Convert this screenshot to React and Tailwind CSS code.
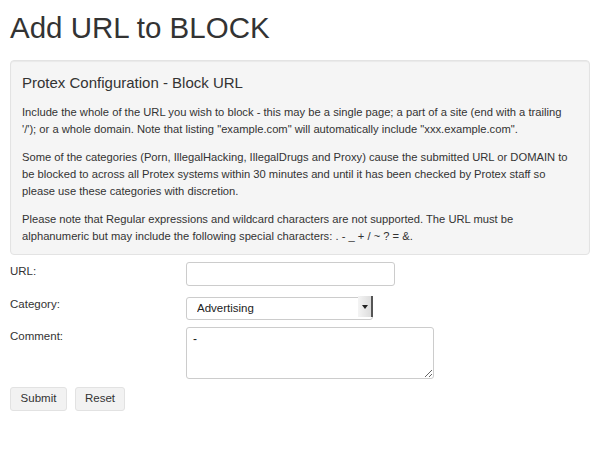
import React from 'react';

const Field = ({ label, children }) => (
  <>
    <label className="pt-[1px] text-[11.5px] leading-[17px] text-[#333]">{label}</label>
    <div>{children}</div>
  </>
);

const App = () => {
  return (
    <div className="min-h-[461px] bg-white px-[10px] font-['Liberation_Sans',Arial,sans-serif] text-[#333]">
      <h1 className="pt-[11px] text-[29.5px] leading-[34px]">Add URL to BLOCK</h1>

      <div className="mt-[15px] rounded-[4px] border border-[#e3e3e3] bg-[#f5f5f5] px-[11px] pt-[12px] pb-[9px] shadow-[inset_0_1px_1px_rgba(0,0,0,0.05)]">
        <h3 className="text-[15px] leading-[20px]">Protex Configuration - Block URL</h3>
        <div className="mt-[11px] space-y-[11px] text-[11.2px] leading-[17px]">
          <p>
            Include the whole of the URL you wish to block - this may be a single page; a part of a site (end with a trailing
            '/'); or a whole domain. Note that listing "example.com" will automatically include "xxx.example.com".
          </p>
          <p>
            Some of the categories (Porn, IllegalHacking, IllegalDrugs and Proxy) cause the submitted URL or DOMAIN to
            be blocked to across all Protex systems within 30 minutes and until it has been checked by Protex staff so
            please use these categories with discretion.
          </p>
          <p>
            Please note that Regular expressions and wildcard characters are not supported. The URL must be
            alphanumeric but may include the following special characters: . - _ + / ~ ? = &amp;.
          </p>
        </div>
      </div>

      <form className="mt-[7px] grid grid-cols-[176px_1fr] gap-y-[9px]">
        <Field label="URL:">
          <input
            type="text"
            className="block h-[24px] w-[209px] rounded-[3px] border border-[#ccc] bg-white px-[6px] text-[12px] outline-none"
          />
        </Field>
        <Field label="Category:">
          <div className="relative h-[23px] w-[187px]">
            <select className="h-full w-full appearance-none rounded-[3px] border border-[#ccc] bg-white pl-[10px] text-[11.5px] text-[#222] outline-none">
              <option>Advertising</option>
            </select>
            <div className="pointer-events-none absolute top-[1px] right-0 flex h-[21px] w-[15px] items-center justify-center border-r-[2px] border-[#555] bg-gradient-to-r from-[#f4f4f4] to-[#ddd]">
              <svg width="6" height="4" viewBox="0 0 6 4">
                <path d="M0 0h6L3 4z" fill="#222" />
              </svg>
            </div>
          </div>
        </Field>
        <Field label="Comment:">
          <textarea
            defaultValue="-"
            className="block h-[52px] w-[248px] rounded-[3px] border border-[#ccc] bg-white px-[6px] py-[4px] text-[12px] leading-[15px] text-[#222] outline-none"
          />
        </Field>
      </form>

      <div className="mt-[8px] flex gap-[8px]">
        <button className="h-[24px] w-[57px] rounded-[3px] border border-[#e2e2e2] bg-[#f2f2f2] text-[11.5px] text-[#333]">
          Submit
        </button>
        <button className="h-[24px] w-[50px] rounded-[3px] border border-[#e2e2e2] bg-[#f2f2f2] text-[11.5px] text-[#333]">
          Reset
        </button>
      </div>
    </div>
  );
};

export default App;
